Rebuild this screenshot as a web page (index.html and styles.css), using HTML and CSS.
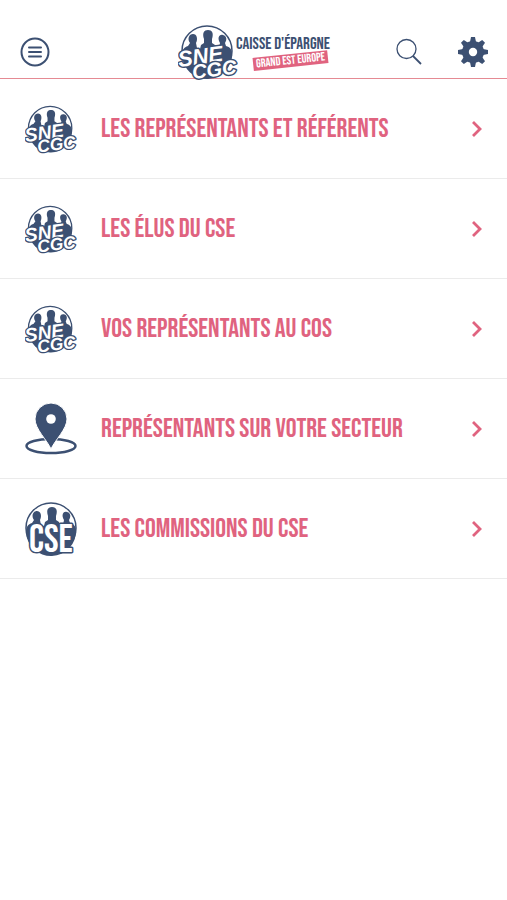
FILE: index.html
```html
<!DOCTYPE html>
<html lang="fr">
<head>
    <meta charset="UTF-8">
    <meta name="viewport" content="width=device-width, initial-scale=1.0">
    <title>SNE CGC</title>
    <link rel="stylesheet" href="styles.css">
</head>
<body>

<!-- Shared drawings -->
<svg class="sprite" aria-hidden="true">
    <symbol id="people" viewBox="0 0 60 56">
        <circle cx="29" cy="27" r="25" fill="#fff" stroke="#3c5072" stroke-width="1.500"/>
        <path fill="#3c5072" d="M4 31C4 26 6 23 10 22L12 19C9 15 11 10 15 10C19 10 20 15 18 19L19 24L22 25L23 21L26 19L26 15C24 9 26 6 30 6C34 6 36 9 34 15L34 19L37 21L38 25L41 24L42 19C39 14 41 10 45 11C49 12 49 16 47 19L48 22C52 23 54 26 54 29A25 25 0 0 1 4 31Z"/>
    </symbol>
    <symbol id="sne" viewBox="0 0 60 56">
        <use href="#people" width="60" height="56"/>
        <g class="badge-text">
            <text x="1" y="43" font-size="22" transform="rotate(-8 1 43)">SNE</text>
            <text x="15" y="55" font-size="20" transform="rotate(-7 15 55)">CGC</text>
        </g>
    </symbol>
    <symbol id="chevron" viewBox="0 0 12 18">
        <path d="M2 2L9 9L2 16" fill="none" stroke="#e0637f" stroke-width="2.800"/>
    </symbol>
</svg>

<header class="header">
    <button class="icon-button" aria-label="Menu">
        <svg width="30" height="30" viewBox="0 0 30 30" fill="none" stroke="#3c5072" stroke-width="2">
            <circle cx="15" cy="15" r="13.500"/>
            <path d="M9 10.500H21M9 15H21M9 19.500H21" stroke-linecap="round"/>
        </svg>
    </button>

    <a class="brand" href="#">
        <svg class="brand-logo"><use href="#sne"/></svg>
        <span class="brand-text">
            <span class="brand-name">CAISSE D'ÉPARGNE</span>
            <span class="brand-region">GRAND EST EUROPE</span>
        </span>
    </a>

    <div class="actions">
        <button class="icon-button" aria-label="Rechercher">
            <svg width="26" height="28" viewBox="0 0 26 28" fill="none" stroke="#3c5072" stroke-width="1.300">
                <circle cx="10.500" cy="11" r="9.500"/>
                <path d="M17 18L25 26" stroke-width="1.800"/>
            </svg>
        </button>
        <button class="icon-button" aria-label="Réglages">
            <svg width="30" height="30" viewBox="0 0 30 30">
                <g fill="#3c5072">
                    <g id="teeth">
                        <path d="M12 5L13 0H17L18 5V25L17 30H13L12 25Z"/>
                        <path d="M12 5L13 0H17L18 5V25L17 30H13L12 25Z" transform="rotate(45 15 15)"/>
                    </g>
                    <use href="#teeth" transform="rotate(90 15 15)"/>
                    <circle cx="15" cy="15" r="11"/>
                </g>
                <circle cx="15" cy="15" r="4.200" fill="#fff"/>
            </svg>
        </button>
    </div>
</header>

<main>
    <nav class="menu">
        <a class="menu-item" href="#">
            <svg class="menu-icon"><use href="#sne"/></svg>
            <span class="menu-label">LES REPRÉSENTANTS ET RÉFÉRENTS</span>
            <svg class="chevron"><use href="#chevron"/></svg>
        </a>
        <a class="menu-item" href="#">
            <svg class="menu-icon"><use href="#sne"/></svg>
            <span class="menu-label">LES ÉLUS DU CSE</span>
            <svg class="chevron"><use href="#chevron"/></svg>
        </a>
        <a class="menu-item" href="#">
            <svg class="menu-icon"><use href="#sne"/></svg>
            <span class="menu-label">VOS REPRÉSENTANTS AU COS</span>
            <svg class="chevron"><use href="#chevron"/></svg>
        </a>
        <a class="menu-item" href="#">
            <svg class="menu-icon" viewBox="0 0 52 52">
                <ellipse cx="26" cy="43" rx="24.500" ry="7" fill="none" stroke="#3c5072" stroke-width="2.500"/>
                <path d="M26 46C22 37 10 26 10 16A16 16 0 0 1 42 16C42 26 30 37 26 46Z" fill="#3c5072" stroke="#fff" stroke-width="1"/>
                <circle cx="26" cy="16" r="4.800" fill="#fff"/>
            </svg>
            <span class="menu-label">REPRÉSENTANTS SUR VOTRE SECTEUR</span>
            <svg class="chevron"><use href="#chevron"/></svg>
        </a>
        <a class="menu-item" href="#">
            <svg class="menu-icon" viewBox="0 0 52 52">
                <use href="#people" x="-3" y="-2" width="60" height="56"/>
                <text class="cse-text" x="4" y="49" font-size="39">CSE</text>
            </svg>
            <span class="menu-label">LES COMMISSIONS DU CSE</span>
            <svg class="chevron"><use href="#chevron"/></svg>
        </a>
    </nav>
</main>

</body>
</html>
```
FILE: styles.css
```css
* {
    box-sizing: border-box;
}
body {
    margin: 0;
    background-color: #fff;
    font-family: "Bebas Neue", "Liberation Sans Narrow", "Liberation Sans", sans-serif;
    color: #3c5072;
}
a {
    color: inherit;
    text-decoration: none;
}
svg {
    display: block;
    flex: none;
    overflow: visible;
}
.sprite {
    position: absolute;
    width: 0;
    height: 0;
}

/* Header */
.header {
    display: grid;
    grid-template-columns: 1fr auto 1fr;
    align-items: center;
    padding: 25px 19px 0 20px;
    border-bottom: 1px solid #e58a93;
}
.icon-button {
    padding: 0;
    border: none;
    background: none;
    justify-self: start;
    cursor: pointer;
}
.brand {
    display: flex;
    align-items: center;
    height: 53px;
}
.brand-logo {
    width: 60px;
    height: 56px;
}
.brand-text {
    display: flex;
    flex-direction: column;
    gap: 2px;
    width: 94px;
    margin-left: -2px;
    white-space: nowrap;
}
.brand-name {
    font-size: 17px;
    line-height: 16px;
}
.brand-region {
    align-self: flex-end;
    margin-right: 2px;
    padding: 0 3px;
    background-color: #e0637f;
    color: #fff;
    font-size: 12px;
    line-height: 13px;
    transform: rotate(-6deg);
}
.actions {
    display: flex;
    align-items: center;
    justify-content: flex-end;
    gap: 36px;
}

/* Menu */
.menu-item {
    display: flex;
    align-items: center;
    gap: 24px;
    height: 100px;
    padding: 0 24px 0 25px;
    border-bottom: 1px solid #ebebeb;
    color: #e0637f;
}
.menu-icon {
    width: 52px;
    height: 52px;
}
.menu-label {
    flex: 1;
    font-size: 27px;
    line-height: 28px;
    white-space: nowrap;
}
.chevron {
    width: 12px;
    height: 18px;
}
.badge-text {
    font-family: "Liberation Sans", sans-serif;
    font-weight: bold;
    font-style: italic;
}
.badge-text,
.cse-text {
    fill: #fff;
    stroke: #3c5072;
    stroke-width: 3px;
    stroke-linejoin: round;
    paint-order: stroke;
}
```
